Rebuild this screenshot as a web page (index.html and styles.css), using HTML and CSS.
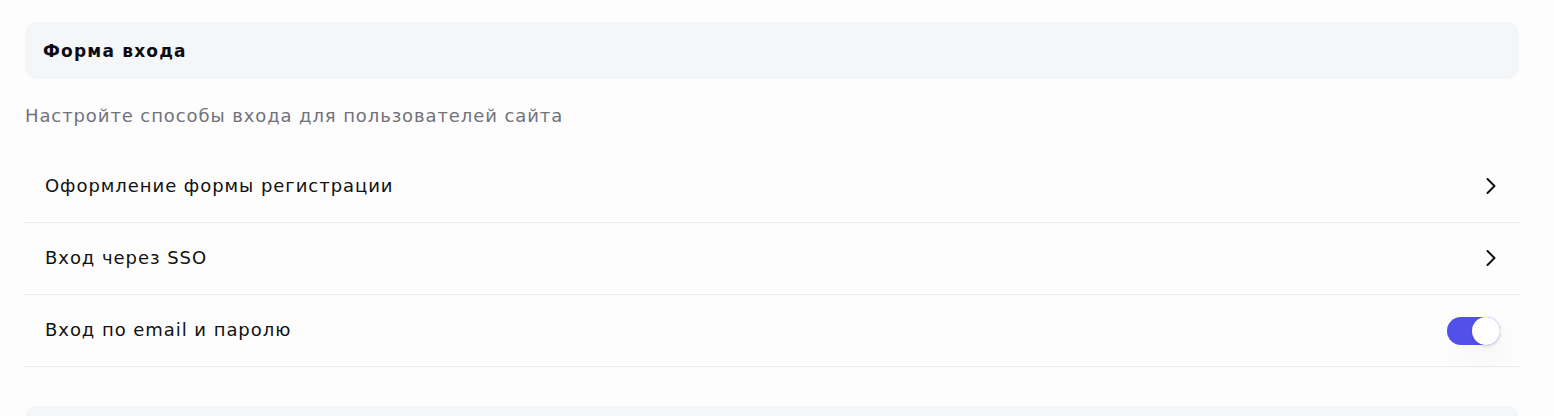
FILE: index.html
```html
<!DOCTYPE html>
<html lang="ru">
<head>
<meta charset="utf-8">
<link rel="stylesheet" href="styles.css">
</head>
<body>
<div class="page">
  <div class="section-head">Форма входа</div>
  <p class="subtitle">Настройте способы входа для пользователей сайта</p>
  <div class="list">
    <div class="row">
      <span class="label">Оформление формы регистрации</span>
      <svg class="chev" width="12" height="18" viewBox="0 0 12 18"><path d="M2.5 2 L9.5 9 L2.5 16" fill="none" stroke="#111" stroke-width="2" stroke-linecap="round" stroke-linejoin="round"/></svg>
    </div>
    <div class="row">
      <span class="label">Вход через SSO</span>
      <svg class="chev" width="12" height="18" viewBox="0 0 12 18"><path d="M2.5 2 L9.5 9 L2.5 16" fill="none" stroke="#111" stroke-width="2" stroke-linecap="round" stroke-linejoin="round"/></svg>
    </div>
    <div class="row">
      <span class="label">Вход по email и паролю</span>
      <span class="toggle on"><span class="knob"></span></span>
    </div>
  </div>
  <div class="section-head next"></div>
</div>
</body>
</html>
```
FILE: styles.css
```css
html, body {
  margin: 0;
  padding: 0;
  background: #fdfdfd;
  font-family: "DejaVu Sans", "Liberation Sans", sans-serif;
  color: #111;
  overflow: hidden;
}
.page {
  padding: 22px 35px 0 25px;
}
.section-head {
  height: 57px;
  background: #f5f6f8;
  border-radius: 12px;
  display: flex;
  align-items: center;
  padding-left: 18px;
  font-weight: 700;
  font-size: 17px;
  letter-spacing: 1.2px;
  color: #0c0c10;
}
.section-head.next {
  margin-top: 39px;
}
.subtitle {
  margin: 26px 0 24px;
  font-size: 18px;
  letter-spacing: 0.9px;
  line-height: 22px;
  color: #72727c;
}
.row {
  height: 71px;
  border-bottom: 1px solid #ececef;
  display: flex;
  align-items: center;
  justify-content: space-between;
  padding: 0 19px 0 20px;
}
.label {
  font-size: 18px;
  letter-spacing: 0.95px;
  color: #111;
  position: relative;
  top: -1px;
}
.chev {
  margin-right: 3px;
  position: relative;
  top: -1px;
}
.toggle {
  width: 53px;
  height: 28px;
  border-radius: 14px;
  background: #5150ea;
  position: relative;
  box-shadow: 8px 14px 28px rgba(0,0,0,0.035);
}
.knob {
  position: absolute;
  right: 0;
  top: 0;
  width: 28px;
  height: 28px;
  border-radius: 50%;
  background: #fff;
  box-shadow: 0 1px 3px rgba(60,60,120,0.25);
}
```
